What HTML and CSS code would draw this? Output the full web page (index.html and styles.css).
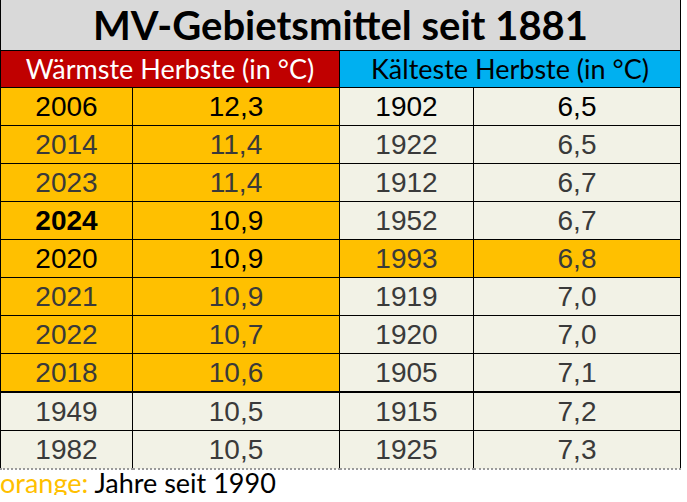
FILE: index.html
```html
<!DOCTYPE html>
<html lang="de">
<head>
<meta charset="utf-8">
<title>MV-Gebietsmittel seit 1881</title>
<link rel="stylesheet" href="styles.css">
</head>
<body>
<table class="tbl">
  <colgroup>
    <col class="c1"><col class="c2"><col class="c3"><col class="c4">
  </colgroup>
  <tr class="title-row"><td colspan="4" class="title">MV-Gebietsmittel seit 1881</td></tr>
  <tr class="head-row">
    <td colspan="2" class="warm">Wärmste Herbste (in °C)</td>
    <td colspan="2" class="cold">Kälteste Herbste (in °C)</td>
  </tr>
  <tr class="r"><td class="o k">2006</td><td class="o k">12,3</td><td class="k">1902</td><td class="k">6,5</td></tr>
  <tr class="r"><td class="o">2014</td><td class="o">11,4</td><td>1922</td><td>6,5</td></tr>
  <tr class="r"><td class="o">2023</td><td class="o">11,4</td><td>1912</td><td>6,7</td></tr>
  <tr class="r"><td class="o k b">2024</td><td class="o k">10,9</td><td>1952</td><td>6,7</td></tr>
  <tr class="r"><td class="o k">2020</td><td class="o k">10,9</td><td class="o">1993</td><td class="o">6,8</td></tr>
  <tr class="r"><td class="o">2021</td><td class="o">10,9</td><td>1919</td><td>7,0</td></tr>
  <tr class="r"><td class="o">2022</td><td class="o">10,7</td><td>1920</td><td>7,0</td></tr>
  <tr class="r"><td class="o">2018</td><td class="o">10,6</td><td>1905</td><td>7,1</td></tr>
  <tr class="r thick"><td>1949</td><td>10,5</td><td>1915</td><td>7,2</td></tr>
  <tr class="r last"><td>1982</td><td>10,5</td><td>1925</td><td>7,3</td></tr>
</table>
<p class="note"><span class="note-key">orange:</span> Jahre seit 1990</p>
</body>
</html>
```
FILE: styles.css
```css
html, body {
  margin: 0;
  padding: 0;
  background: #ffffff;
}
.tbl {
  border-collapse: collapse;
  table-layout: fixed;
  width: 680px;
}
.c1 { width: 132px; }
.c2 { width: 207px; }
.c3 { width: 134px; }
.c4 { width: 207px; }
.tbl td {
  padding: 0;
  border: 1px solid #000;
  text-align: center;
  vertical-align: middle;
}
.title-row td {
  border-top: none;
  height: 50px;
  background: #d9d9d9;
  font-family: "Lato", sans-serif;
  font-weight: 700;
  font-size: 40px;
  line-height: 46px;
  color: #000;
}
.head-row td {
  height: 36px;
  font-family: "Lato", sans-serif;
  font-size: 27px;
  line-height: 30px;
}
.warm {
  background: #c00000;
  color: #fff;
}
.cold {
  background: #00b0f0;
  color: #000;
}
.r td {
  height: 37px;
  background: #f2f2e6;
  font-family: "Liberation Sans", Arial, sans-serif;
  font-size: 28px;
  line-height: 32px;
  color: #3a3a3a;
}
.r td.o { background: #ffc000; }
.r td.k { color: #000; }
.r td.b { font-weight: 700; }
.r.thick td { border-top: 2px solid #000; }
.r.last td {
  border-bottom: 2px dotted #9a9a9a;
}
.note {
  margin: 0;
  padding: 0;
  font-family: "Lato", sans-serif;
  font-size: 27px;
  line-height: 25px;
  color: #000;
}
.note-key { color: #ffc000; }
```
